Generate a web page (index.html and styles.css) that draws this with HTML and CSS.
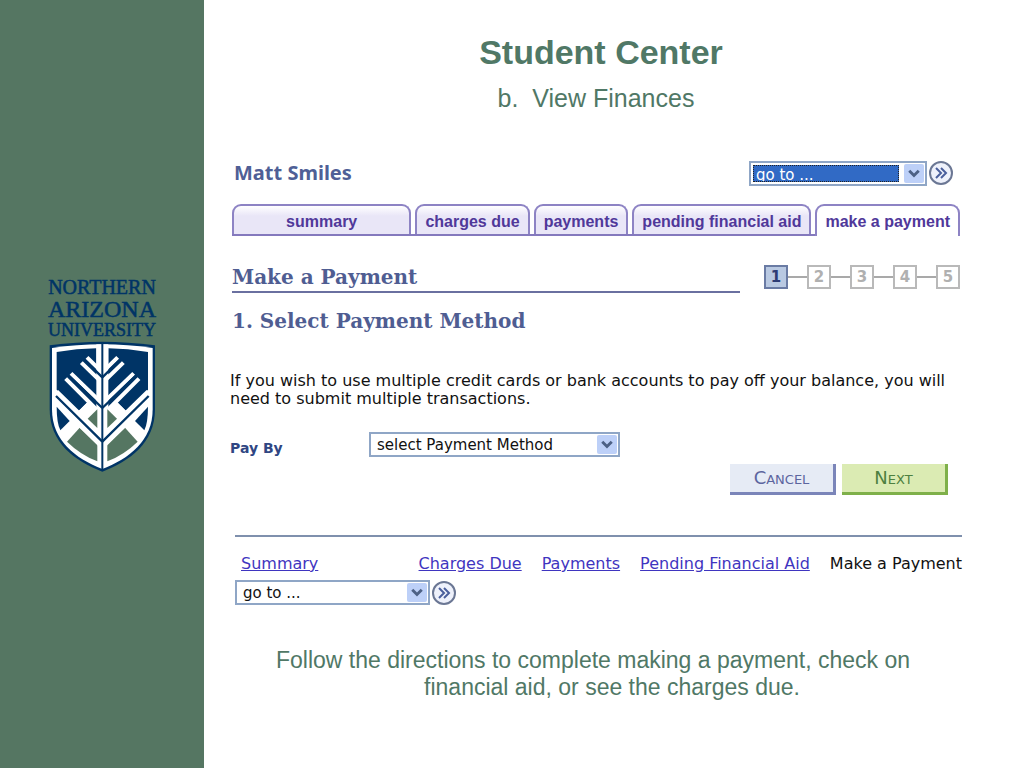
FILE: index.html
```html
<!DOCTYPE html>
<html lang="en">
<head>
    <meta charset="utf-8">
    <title>Student Center - View Finances</title>
    <link rel="stylesheet" href="styles.css">
</head>
<body>
    <aside class="sidebar">
        <div class="logo">
            <div class="logo-small">NORTHERN</div>
            <div class="logo-big">ARIZONA</div>
            <div class="logo-last">UNIVERSITY</div>
            <svg class="shield" viewBox="50 212 330 396" aria-hidden="true">
                <defs>
                    <!-- left half, mirrored for the right one -->
                    <g id="half">
                        <path fill="#003466" d="M79 248 Q140 238 198 237 V424 L172 398 L144 426 L79 361 Z"/>
                        <path fill="#fff" d="M144 426 L172 398 L201 426 V484 Z"/>
                        <path fill="#003466" d="M79 412 L118 455 L90 483 Q79 460 79 412 Z"/>
                        <path fill="#557662" d="M110 517 L148 475 L201 525 V576 Q150 556 110 517 Z"/>
                        <path fill="none" stroke="#fff" stroke-width="12" d="M170 264 L213 306 M153 280 L216 341 M122 312 L213 400 M106 328 L206 428 M79 366 L216 500 M79 400 L216 534"/>
                        <path fill="#557662" d="M172 448 L201 420 V476 Z"/>
                        <path fill="none" stroke="#003466" stroke-width="7" d="M161 270 L216 324 M114 318 L216 416 M77 380 L216 517"/>
                    </g>
                </defs>
                <path fill="#003466" d="M58 228 Q140 217 216 217 Q292 217 374 228 V420 C374 520 300 575 216 607 C132 575 58 520 58 420 Z"/>
                <path fill="#fff" d="M65 236 Q140 225 216 225 Q292 225 367 236 V420 C367 515 296 568 216 599 C136 568 65 515 65 420 Z"/>
                <use href="#half"/>
                <use href="#half" transform="matrix(-1 0 0 1 432 0)"/>
                <path fill="none" stroke="#fff" stroke-width="36" d="M216 225 V288"/>
                <path fill="none" stroke="#003466" stroke-width="6" d="M216 220 V600"/>
            </svg>
        </div>
    </aside>

    <main class="main">
        <header class="header">
            <h1>Student Center</h1>
            <p>b.&nbsp; View Finances</p>
        </header>

        <div class="student">
            <h2>Matt Smiles</h2>
            <form class="goto">
                <span class="select-box select-active">
                    <select aria-label="go to">
                        <option>go to ...</option>
                    </select>
                    <svg class="arrow" viewBox="0 0 20 20" aria-hidden="true"><path d="M5 7 L10 12 L15 7"/></svg>
                </span>
                <button type="button" class="go" aria-label="Go">
                    <svg viewBox="0 0 24 24" aria-hidden="true"><circle cx="12" cy="12" r="11"/><path d="M7 7 L12 12 L7 17 M12 7 L17 12 L12 17"/></svg>
                </button>
            </form>
        </div>

        <nav class="tabs">
            <a href="#" class="tab tab-wide">summary</a>
            <a href="#" class="tab">charges due</a>
            <a href="#" class="tab">payments</a>
            <a href="#" class="tab">pending financial aid</a>
            <a href="#" class="tab tab-current">make a payment</a>
        </nav>

        <div class="step-row">
            <h2>Make a Payment</h2>
            <ol class="steps">
                <li class="current">1</li>
                <li>2</li>
                <li>3</li>
                <li>4</li>
                <li>5</li>
            </ol>
        </div>

        <h3>1. Select Payment Method</h3>

        <p class="info">If you wish to use multiple credit cards or bank accounts to pay off your balance, you will need to submit multiple transactions.</p>

        <form>
            <div class="pay-by">
                <label for="method">Pay By</label>
                <span class="select-box select-method">
                    <select id="method">
                        <option>select Payment Method</option>
                    </select>
                    <svg class="arrow" viewBox="0 0 20 20" aria-hidden="true"><path d="M5 7 L10 12 L15 7"/></svg>
                </span>
            </div>
            <div class="buttons">
                <button type="button" class="cancel">Cancel</button>
                <button type="button" class="next">Next</button>
            </div>
        </form>

        <nav class="links">
            <span class="link-first"><a href="#">Summary</a></span>
            <a href="#">Charges Due</a>
            <a href="#">Payments</a>
            <a href="#">Pending Financial Aid</a>
            <span>Make a Payment</span>
        </nav>

        <form class="goto goto-bottom">
            <span class="select-box">
                <select aria-label="go to">
                    <option>go to ...</option>
                </select>
                <svg class="arrow" viewBox="0 0 20 20" aria-hidden="true"><path d="M5 7 L10 12 L15 7"/></svg>
            </span>
            <button type="button" class="go" aria-label="Go">
                <svg viewBox="0 0 24 24" aria-hidden="true"><circle cx="12" cy="12" r="11"/><path d="M7 7 L12 12 L7 17 M12 7 L17 12 L12 17"/></svg>
            </button>
        </form>

        <p class="directions">Follow the directions to complete making a payment, check on financial aid, or see the charges due.</p>
    </main>
</body>
</html>
```
FILE: styles.css
```css
* {
    box-sizing: border-box;
}

body {
    margin: 0;
    display: flex;
    min-height: 100vh;
    background-color: #fff;
    font-family: "DejaVu Sans", Verdana, sans-serif;
    font-size: 15px;
    color: #111;
}

h1, h2, h3, p {
    margin: 0;
}

.sidebar {
    flex: 0 0 204px;
    display: flex;
    justify-content: center;
    background-color: #557662;
}

.logo {
    display: flex;
    flex-direction: column;
    align-items: center;
    padding-top: 277px;
    font-family: "Liberation Serif", "Times New Roman", serif;
    color: #003466;
    -webkit-text-stroke: 0.5px #003466;
}

.logo-small {
    font-size: 20px;
    line-height: 21px;
}

.logo-big {
    font-size: 24px;
    line-height: 23px;
}

.logo-last {
    font-size: 18px;
    line-height: 19px;
}

.shield {
    width: 110px;
    height: 132px;
}

.main {
    flex: 1;
    min-width: 0;
    padding: 32px 64px 40px 28px;
}

.header {
    text-align: center;
    color: #507866;
    font-family: "Liberation Sans", Arial, sans-serif;
}

.header h1 {
    padding-left: 10px;
    font-size: 34px;
    line-height: 40px;
}

.header p {
    margin-top: 12px;
    font-size: 25px;
    line-height: 28px;
}

.student {
    display: flex;
    justify-content: space-between;
    align-items: center;
    margin-top: 46px;
    padding: 0 7px 0 2px;
}

.student h2 {
    font-family: "Noto Sans", sans-serif;
    font-size: 20px;
    line-height: 30px;
    color: #4f5f96;
}

.goto {
    display: flex;
    align-items: center;
    gap: 2px;
}

.goto .select-box {
    width: 178px;
}

.select-box {
    position: relative;
    display: block;
    height: 25px;
    border: 2px solid #8fa6c6;
}

.select-box select {
    appearance: none;
    width: 100%;
    height: 100%;
    border: none;
    padding: 0 26px 0 6px;
    background-color: #fff;
    font-family: inherit;
    font-size: 15px;
    color: #111;
}

.select-active {
    padding: 2px 26px 2px 2px;
}

.select-active select {
    padding: 0 2px;
    border: 1px dotted #222;
    background-color: #316ac5;
    color: #fff;
}

.arrow {
    position: absolute;
    top: 1px;
    right: 1px;
    width: 20px;
    height: 19px;
    border-radius: 2px;
    background-color: #bdd0f8;
    fill: none;
    stroke: #4d6185;
    stroke-width: 3;
    pointer-events: none;
}

.go {
    width: 24px;
    height: 24px;
    padding: 0;
    border: none;
    background: none;
    cursor: pointer;
}

.go svg {
    display: block;
    fill: #eef1fb;
    stroke: #6b7794;
    stroke-width: 2;
}

.go path {
    fill: none;
    stroke: #4a5f9c;
}

.tabs {
    display: flex;
    gap: 4px;
    margin-top: 16px;
    border-bottom: 2px solid #8479bd;
    font-family: "Liberation Sans", Arial, sans-serif;
    font-size: 16px;
    font-weight: bold;
}

.tab {
    height: 30px;
    padding: 0 8px;
    border: 2px solid #8d83c4;
    border-bottom: none;
    border-radius: 9px 9px 0 0;
    background: linear-gradient(#fff, #e9e6f7 10px);
    line-height: 32px;
    text-align: center;
    text-decoration: none;
    white-space: nowrap;
    color: #50389a;
}

.tab-wide {
    flex: 1;
}

.tab-current {
    height: 32px;
    margin-bottom: -2px;
    background: #fff;
}

.step-row {
    display: flex;
    gap: 24px;
    margin-top: 27px;
}

.step-row h2,
.main h3 {
    font-family: "DejaVu Serif", Georgia, serif;
    font-size: 20px;
    line-height: 28px;
    color: #4f5d92;
}

.step-row h2 {
    flex: 1;
    border-bottom: 2px solid #6a70a0;
}

.main h3 {
    margin-top: 14px;
}

.steps {
    display: flex;
    gap: 19px;
    margin: 2px 0 0;
    padding: 0;
    list-style: none;
}

.steps li {
    position: relative;
    width: 24px;
    height: 24px;
    border: 2px solid #b9b9b9;
    font-size: 15px;
    font-weight: bold;
    line-height: 20px;
    text-align: center;
    color: #b0b0b0;
}

.steps .current {
    border-color: #6a7ba4;
    background-color: #b9c9e2;
    color: #2d3c74;
}

/* line between two steps */
.steps li + li::before {
    content: "";
    position: absolute;
    top: 9px;
    right: 22px;
    width: 19px;
    height: 2px;
    background-color: #a9a9a9;
}

.info {
    margin: 37px 0 0 -2px;
    font-size: 16px;
    line-height: 18px;
}

.pay-by {
    display: flex;
    align-items: center;
    margin: 24px 0 0 -2px;
}

.pay-by label {
    width: 139px;
    padding-top: 6px;
    font-size: 14px;
    font-weight: bold;
    color: #2f4683;
}

.select-method {
    width: 251px;
}

.buttons {
    display: flex;
    justify-content: flex-end;
    gap: 6px;
    margin-top: 7px;
    padding-right: 12px;
}

.buttons button {
    width: 106px;
    height: 31px;
    border: none;
    font-family: "DejaVu Sans", Verdana, sans-serif;
    font-size: 18px;
    font-variant: small-caps;
    line-height: 26px;
    cursor: pointer;
}

.buttons .cancel {
    border-right: 3px solid #7b85b9;
    border-bottom: 3px solid #7b85b9;
    background-color: #e6ebf5;
    color: #5c659f;
}

.buttons .next {
    border-right: 3px solid #7fb04a;
    border-bottom: 3px solid #7fb04a;
    background-color: #dbebb3;
    color: #4d8040;
}

.links {
    display: flex;
    gap: 20px;
    margin: 40px -2px 0 3px;
    padding: 17px 0 0 6px;
    border-top: 2px solid #7f90ad;
    font-size: 16px;
    line-height: 20px;
    white-space: nowrap;
}

.links a {
    color: #3f35c0;
}

.link-first {
    flex: 1;
}

.goto-bottom {
    margin: 6px 0 0 3px;
}

.goto-bottom .select-box {
    width: 195px;
}

.directions {
    margin: 42px 0 0 32px;
    padding: 0 16px;
    font-family: "Liberation Sans", Arial, sans-serif;
    font-size: 23px;
    line-height: 27px;
    text-align: center;
    text-indent: -38px;
    color: #507866;
}
```
